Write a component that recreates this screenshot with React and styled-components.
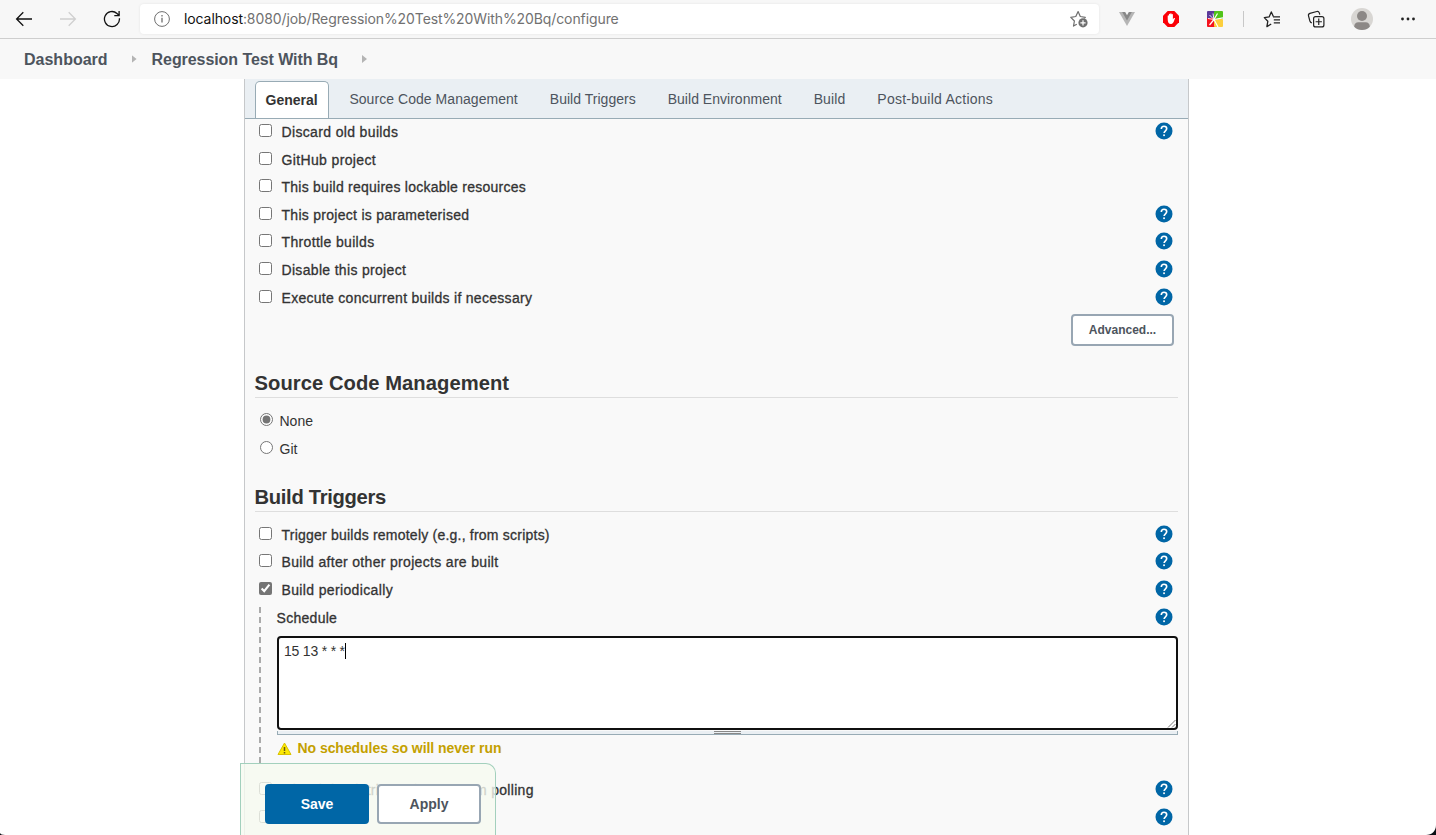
import React, {Fragment} from 'react';
import styled, {createGlobalStyle} from 'styled-components';

const GlobalStyle = createGlobalStyle`
* {
    box-sizing: border-box;
}
body {
    margin: 0;
    background: #fff;
    color: #333;
    font-family: "Liberation Sans", Arial, sans-serif;
    font-size: 14px;
    overflow: hidden;
}
`;

const Window = styled.div`
position: relative;
display: flex;
flex-direction: column;
height: 835px;
overflow: hidden;
`;

const Toolbar = styled.div`
display: flex;
align-items: center;
flex: none;
height: 39px;
padding-left: 2px;
background: #f7f7f7;
border-bottom: 1px solid #cecece;
`;

const Slot = styled.div`
display: flex;
align-items: center;
justify-content: center;
flex: none;
width: ${props => props.$width || 44}px;
height: 38px;

svg {
    display: block;
}
`;

const AddressBar = styled.div`
display: flex;
align-items: center;
width: 959px;
height: 30px;
margin: 0 6px;
padding: 0 11px 0 14px;
background: #fff;
border-radius: 4px;
box-shadow: 0 0 3px rgba(0, 0, 0, 0.08);
`;

const Url = styled.span`
flex: 1;
margin: -1px 0 0 14px;
color: #717171;
font-family: Inter, sans-serif;
font-size: 14px;
letter-spacing: -0.1px;
white-space: nowrap;

b {
    color: #111;
    font-weight: 400;
}
`;

const Divider = styled.div`
width: 1px;
height: 16px;
background: #c8c8c8;
`;

const Breadcrumbs = styled.div`
display: flex;
align-items: center;
flex: none;
height: 40px;
padding-left: 24px;
background: #f8f8f8;
`;

const Crumb = styled.a`
padding-top: 2px;
color: #4d545d;
font-size: 16px;
font-weight: bold;
letter-spacing: ${props => props.$track || 0}px;
`;

const CrumbArrow = styled.span`
width: 5px;
height: 8px;
margin: 0 15px 0 24px;
background: #b4b4b4;
clip-path: polygon(0 0, 100% 50%, 0 100%);
`;

const Panel = styled.main`
flex: 1;
width: 945px;
margin-left: 244px;
background: #f9f9f9;
border: solid #c6c8ca;
border-width: 0 1px;
`;

const TabBar = styled.div`
display: flex;
height: 40px;
padding: 2px 0 0 10px;
background: #eaeff3;
border-bottom: 1px solid #98abb5;
`;

const Tab = styled.a`
padding: 10px ${props => props.$active ? 9.5 : 16}px 0;
color: ${props => props.$active ? '#333' : '#4d545d'};
font-weight: ${props => props.$active ? 'bold' : 'normal'};
line-height: 16px;
letter-spacing: ${props => props.$track || 0}px;
white-space: nowrap;

${props => props.$active && `
width: 74px;
margin-right: 4.4px;
background: #fff;
border: solid #98abb5;
border-width: 1px 1px 0;
border-radius: 5px 5px 0 0;
`}
`;

const Section = styled.section`
padding: 0 10px;
`;

const Heading = styled.h2`
height: ${props => props.$height}px;
margin: 0 0 ${props => props.$gap}px;
padding-top: ${props => props.$height - 25.5}px;
border-bottom: 1px solid #dedede;
color: #333;
font-size: 20.2px;
line-height: 23px;
letter-spacing: ${props => props.$track || 0}px;
text-indent: -0.5px;
`;

const Row = styled.div`
display: flex;
align-items: flex-start;
height: 27.6px;
padding: 0 5px 0 4px;
`;

const Label = styled.label`
flex: 1;
margin-left: ${props => props.$indent}px;
line-height: 26px;
letter-spacing: ${props => props.$track || 0}px;
-webkit-text-stroke: ${props => props.$plain ? 0 : 0.3}px #333;
white-space: nowrap;
`;

const Check = styled.input`
flex: none;
width: 13px;
height: 13px;
margin: 5px 0 0 ${props => props.type === 'radio' ? 1 : 0}px;
accent-color: #757575;
`;

const HelpLink = styled.a`
flex: none;
height: 18px;
margin-top: 3px;

svg {
    display: block;
}
`;

const Button = styled.button`
width: ${props => props.$small ? 103 : 104}px;
height: ${props => props.$small ? 32 : 40}px;
padding: 0;
background: ${props => props.$primary ? '#0066a6' : '#fff'};
color: ${props => props.$primary ? '#fff' : '#4d545d'};
border: 2px solid ${props => props.$primary ? '#0066a6' : '#98a6b3'};
border-radius: 4px;
font-family: inherit;
font-size: ${props => props.$small ? 12 : 14}px;
font-weight: bold;
`;

const AdvancedRow = styled.div`
display: flex;
justify-content: flex-end;
padding: 1.8px 4px 0 0;
`;

const Nested = styled.div`
display: flex;
height: 172.7px;
padding-left: 4px;
`;

const DashedLine = styled.div`
width: 2px;
height: 156px;
margin: 2.4px 16px 0 0;
background: repeating-linear-gradient(#aaa 0 6px, transparent 6px 10px);
`;

const NestedBody = styled.div`
flex: 1;
`;

const Schedule = styled.div`
position: relative;
height: 94px;
margin-top: 3.9px;
padding: 3px 5px;
background: #fff;
border: 2px solid #101010;
border-radius: 4px;
line-height: 20px;
letter-spacing: -0.2px;
`;

const Caret = styled.span`
display: inline-block;
width: 1px;
height: 16px;
background: #000;
vertical-align: -3px;
`;

const ResizeCorner = styled.svg`
position: absolute;
right: 0;
bottom: 0;
`;

const Grip = styled.div`
display: flex;
justify-content: center;
height: 4px;
margin-top: 1px;
background: #eaeff3;
border: solid #98abb5;
border-width: 0 1px 1px;

&::after {
    content: "";
    width: 27px;
    height: 3px;
    background: linear-gradient(#888 0 1px, transparent 1px 2px, #888 2px 3px);
}
`;

const Warning = styled.div`
display: flex;
align-items: center;
gap: 5.5px;
margin-top: 4px;
color: #c4a000;
font-weight: bold;
line-height: 18px;
letter-spacing: -0.05px;

svg {
    position: relative;
    top: 1px;
}
`;

const BottomBar = styled.div`
position: absolute;
left: 240px;
bottom: 0;
display: flex;
gap: 8px;
width: 256px;
height: 72px;
padding: 20px 0 0 24px;
background: rgba(246, 250, 240, 0.8);
border: solid #a3d0bd;
border-width: 1px 1px 0;
border-radius: 0 10px 0 0;
`;

const WindowCorner = styled.svg`
position: absolute;
bottom: 0;
${props => props.$side}: 0;
`;

const tabs = [
    {name: 'General', active: true},
    {name: 'Source Code Management', track: 0.05},
    {name: 'Build Triggers', track: 0.02},
    {name: 'Build Environment', track: 0.02},
    {name: 'Build', track: 0.1},
    {name: 'Post-build Actions', track: 0.25}
];

const generalOptions = [
    {label: 'Discard old builds', track: 0.35, help: true},
    {label: 'GitHub project', track: 0.36},
    {label: 'This build requires lockable resources', track: 0.25},
    {label: 'This project is parameterised', track: 0.28, help: true},
    {label: 'Throttle builds', track: 0.34, help: true},
    {label: 'Disable this project', track: 0.32, help: true},
    {label: 'Execute concurrent builds if necessary', track: 0.29, help: true}
];

const triggers = [
    {label: 'Trigger builds remotely (e.g., from scripts)', track: 0.22, help: true},
    {label: 'Build after other projects are built', track: 0.32, help: true},
    {label: 'Build periodically', track: 0.36, help: true, checked: true}
];

const scmTriggers = [
    {label: 'GitHub hook trigger for GITScm polling', track: 0.29, help: true},
    {label: 'Poll SCM', track: 0.3, help: true}
];

function Help() {
    return (
        <HelpLink>
            <svg width="18" height="18" viewBox="0 0 18 18" fill="none">
                <circle cx="9" cy="9" r="8.5" fill="#0066a6"/>
                <path d="M6.3 7C6.3 5.4 7.4 4.3 9 4.3S11.7 5.3 11.7 6.8C11.7 8.7 9.1 8.9 9.1 11.1" stroke="#fff" strokeWidth="1.6"/>
                <rect x="8.2" y="12.4" width="1.7" height="1.7" fill="#fff"/>
            </svg>
        </HelpLink>
    );
}

function Option({label, track, help, checked}) {
    return (
        <Row>
            <Check type="checkbox" defaultChecked={checked}/>
            <Label $indent={9.5} $track={track}>{label}</Label>
            {help && <Help/>}
        </Row>
    );
}

function BrowserToolbar() {
    return (
        <Toolbar>
            <Slot>
                <svg width="18" height="16" viewBox="0 0 18 16" fill="none" stroke="#111" strokeWidth="1.3">
                    <path d="M17 8H1.8M8.3 1.3L1.6 8l6.7 6.7"/>
                </svg>
            </Slot>
            <Slot>
                <svg width="18" height="16" viewBox="0 0 18 16" fill="none" stroke="#cfcfcf" strokeWidth="1.3">
                    <path d="M1 8h15.2M9.7 1.3L16.4 8l-6.7 6.7"/>
                </svg>
            </Slot>
            <Slot>
                <svg width="18" height="18" viewBox="0 0 18 18" fill="none" stroke="#111" strokeWidth="1.3">
                    <path d="M16.4 8.2A7.5 7.5 0 1 1 14 3.5L16 5.4M16.1 1v4.7h-4.8"/>
                </svg>
            </Slot>
            <AddressBar>
                <svg width="16" height="16" viewBox="0 0 16 16" fill="none" stroke="#6f6f6f">
                    <circle cx="8" cy="8" r="7.4"/>
                    <path d="M8 6.8v4.8M8 4v1.4" strokeWidth="1.3"/>
                </svg>
                <Url><b>localhost</b>:8080/job/Regression%20Test%20With%20Bq/configure</Url>
                <svg width="18" height="18" viewBox="0 0 18 18" fill="none" stroke="#6f6f6f" strokeWidth="1.2" strokeLinejoin="round">
                    <path d="M6.8 14.2l-3.3 1.9.9-5.1L.8 7.3l5-.8L8.1 1.6l2.2 4.9 5 .8-1 1.1"/>
                    <circle cx="13" cy="12.8" r="4.6" fill="#6f6f6f" stroke="none"/>
                    <path d="M13 10.2v5.2M10.4 12.8h5.2" stroke="#fff"/>
                </svg>
            </AddressBar>
            <Slot>
                <svg width="16" height="14" viewBox="0 0 16 14">
                    <path d="M0 0h16L8 14z" fill="#b5b5b5"/>
                    <path d="M3.2 0h9.6L8 8.4z" fill="#888"/>
                    <path d="M6.2 0h3.6L8 3.2z" fill="#f7f7f7"/>
                </svg>
            </Slot>
            <Slot>
                <svg width="16" height="16" viewBox="0 0 16 16">
                    <path d="M4.7 0h6.6L16 4.7v6.6L11.3 16H4.7L0 11.3V4.7z" fill="#fb0007"/>
                    <path d="M4.7 8V5c0-.9 1.2-.9 1.2 0V3.5c0-.9 1.3-.9 1.3 0V3c0-.9 1.4-.9 1.4 0v.6c0-.9 1.3-.9 1.3 0v4.8c.6-1 1.3-1.6 2.2-1.1-.9 1.5-1.4 5.7-4 5.7C5.5 13 4.700 11 4.700 8z" fill="#fff"/>
                </svg>
            </Slot>
            <Slot>
                <svg width="16" height="16" viewBox="0 0 16 16">
                    <rect width="9" height="9" rx="1" fill="#5b3a9a"/>
                    <rect x="7" width="9" height="8" rx="1" fill="#52c41a"/>
                    <rect y="7" width="9" height="9" rx="1" fill="#f5121d"/>
                    <rect x="7" y="8" width="9" height="8" rx="1" fill="#fccf3d"/>
                    <path d="M7 8.5L10.5 2.5M7 8.5L16 6.8M7 8.5l4 7.5M7 8.5l-4.5 5.5" stroke="#fff" strokeWidth="1.2"/>
                    <path d="M7 8.5L1 7.5M7 8.5L2.5 4M7 8.5L6 2.5" stroke="#fff" strokeWidth="0.9"/>
                </svg>
            </Slot>
            <Slot $width={13}><Divider/></Slot>
            <Slot>
                <svg width="18" height="18" viewBox="0 0 18 18" fill="none" stroke="#222" strokeWidth="1.3" strokeLinejoin="round">
                    <path d="M8.2 14l-4.3 2.6.9-5.3L1.3 7.6l4.8-.7 2.2-5 2.1 4.7"/>
                    <path d="M10.8 9.9H17M10 6.9H17M10.8 12.9H17"/>
                </svg>
            </Slot>
            <Slot>
                <svg width="18" height="18" viewBox="0 0 18 18" fill="none" stroke="#222" strokeWidth="1.2">
                    <rect x="6.6" y="6.6" width="10.3" height="10.3" rx="2"/>
                    <path d="M11.75 8.6v6.3M8.6 11.75h6.300"/>
                    <path d="M4.8 12.9C3.7 12.500 3.200 12 2.900 11L1.500 5.800C1.200 4.500 1.800 3.600 2.900 3.300L9.800 1.500c1.200-.3 2.100.3 2.500 1.400l.5 1.800"/>
                </svg>
            </Slot>
            <Slot $width={47}>
                <svg width="22" height="22" viewBox="0 0 22 22">
                    <circle cx="11" cy="11" r="11" fill="#d8d6d3"/>
                    <circle cx="11" cy="8" r="5" fill="#8c8886"/>
                    <path d="M3.2 18.7C3.2 15.8 4.8 14.2 7.3 14.2h7.4c2.5 0 4.1 1.6 4.1 4.5A11 11 0 0 1 3.2 18.7z" fill="#8c8886"/>
                </svg>
            </Slot>
            <Slot $width={46}>
                <svg width="14" height="4" viewBox="0 0 14 4" fill="#222">
                    <circle cx="1.5" cy="2" r="1.4"/>
                    <circle cx="7" cy="2" r="1.4"/>
                    <circle cx="12.5" cy="2" r="1.4"/>
                </svg>
            </Slot>
        </Toolbar>
    );
}

function ScheduleField() {
    return (
        <Nested>
            <DashedLine/>
            <NestedBody>
                <Row>
                    <Label $indent={-4.4} $track={0.27}>Schedule</Label>
                    <Help/>
                </Row>
                <Schedule>
                    15 13 * * *<Caret/>
                    <ResizeCorner width="9" height="9" viewBox="0 0 9 9" stroke="#555" strokeWidth="0.8" fill="none">
                        <path d="M1 8.5L8.5 1M5 8.5L8.5 5"/>
                    </ResizeCorner>
                </Schedule>
                <Grip/>
                <Warning>
                    <svg width="15" height="14" viewBox="0 0 15 14">
                        <path d="M7.5 1L14 12.5H1z" fill="#fce903" stroke="#d9c200" strokeLinejoin="round"/>
                        <path d="M7.5 5v4M7.5 10v1.5" stroke="#6b5a10" strokeWidth="1.5"/>
                    </svg>
                    No schedules so will never run
                </Warning>
            </NestedBody>
        </Nested>
    );
}

function App() {
    return (
        <Fragment>
            <GlobalStyle/>
            <Window>
                <BrowserToolbar/>
                <Breadcrumbs>
                    <Crumb>Dashboard</Crumb>
                    <CrumbArrow/>
                    <Crumb $track={-0.07}>Regression Test With Bq</Crumb>
                    <CrumbArrow/>
                </Breadcrumbs>
                <Panel>
                    <TabBar>
                        {tabs.map(tab => (
                            <Tab key={tab.name} $active={tab.active} $track={tab.track}>{tab.name}</Tab>
                        ))}
                    </TabBar>
                    <Section>
                        {generalOptions.map(option => <Option key={option.label} {...option}/>)}
                        <AdvancedRow>
                            <Button $small>Advanced...</Button>
                        </AdvancedRow>
                    </Section>
                    <Section>
                        <Heading $height={52} $gap={10} $track={0.05}>Source Code Management</Heading>
                        <Row>
                            <Check type="radio" name="scm" defaultChecked/>
                            <Label $indent={6.5} $plain>None</Label>
                        </Row>
                        <Row>
                            <Check type="radio" name="scm"/>
                            <Label $indent={6.5} $plain>Git</Label>
                        </Row>
                    </Section>
                    <Section>
                        <Heading $height={48.8} $gap={9.8} $track={-0.3}>Build Triggers</Heading>
                        {triggers.map(option => <Option key={option.label} {...option}/>)}
                        <ScheduleField/>
                        {scmTriggers.map(option => <Option key={option.label} {...option}/>)}
                    </Section>
                </Panel>
                <BottomBar>
                    <Button $primary>Save</Button>
                    <Button>Apply</Button>
                </BottomBar>
                <WindowCorner $side="right" width="10" height="10" viewBox="0 0 10 10">
                    <path d="M10 0v10H0C6 10 10 6 10 0z" fill="#0a0f14"/>
                </WindowCorner>
                <WindowCorner $side="left" width="5" height="2" viewBox="0 0 5 2">
                    <path d="M0 0v2h5C2 2 .5 1.2 0 0z" fill="#0a0f14"/>
                </WindowCorner>
            </Window>
        </Fragment>
    );
}

export default App;
